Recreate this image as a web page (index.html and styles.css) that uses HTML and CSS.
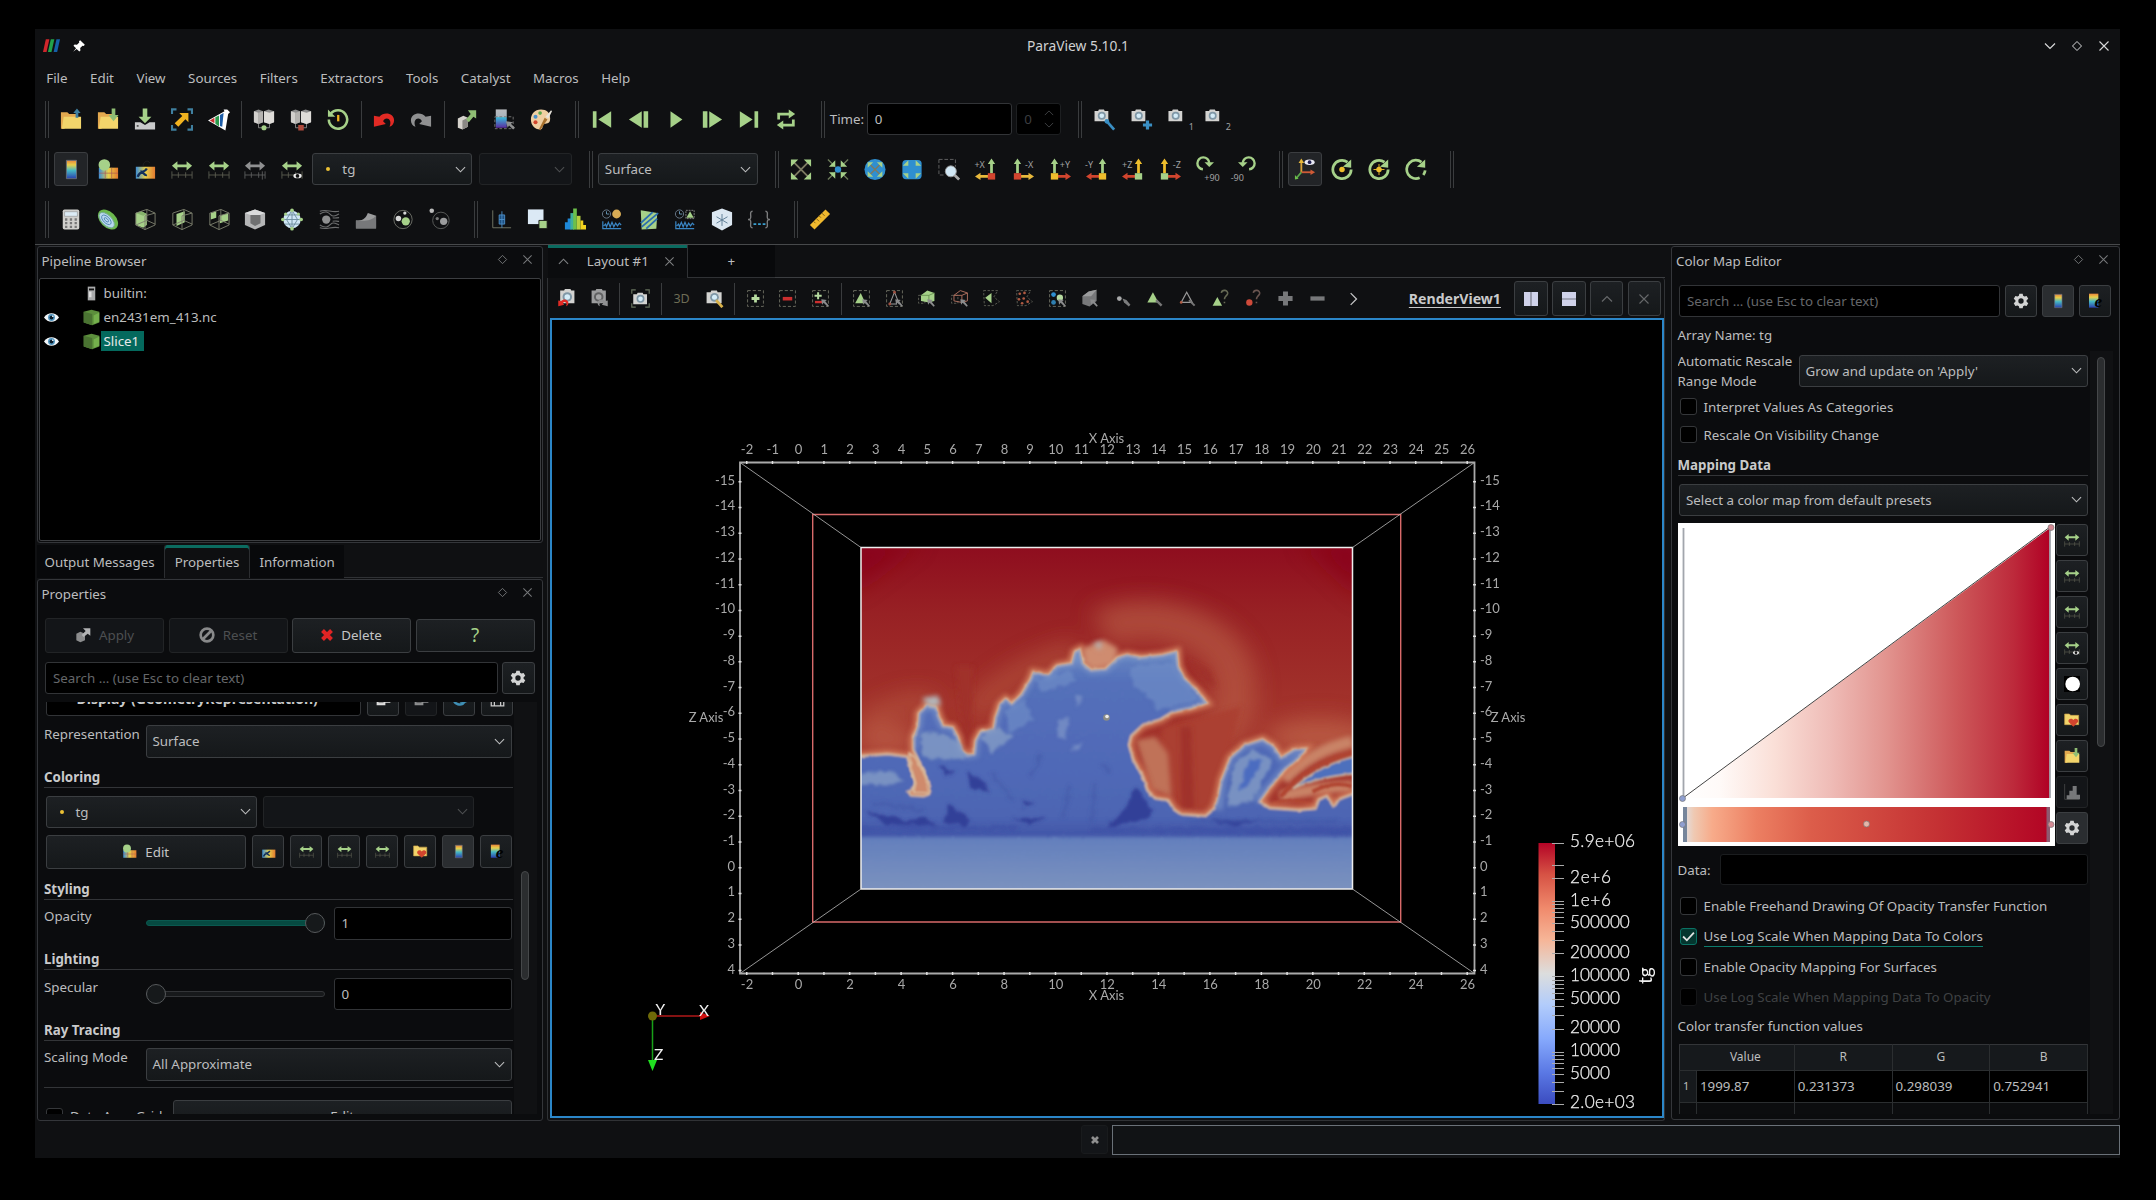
FILE: index.html
```html
<!DOCTYPE html>
<html lang="en">
<head>
<meta charset="utf-8">
<title>ParaView 5.10.1</title>
<link rel="stylesheet" href="styles.css">
</head>
<body>
<svg class="defs" width="0" height="0">
  <defs>
    <linearGradient id="jet" x1="0" y1="0" x2="0" y2="1"><stop offset="0" stop-color="#e8843c"/><stop offset=".25" stop-color="#e8d04a"/><stop offset=".55" stop-color="#45b8c4"/><stop offset="1" stop-color="#2a3fae"/></linearGradient>
    <linearGradient id="jeth" x1="0" y1="0" x2="1" y2="0"><stop offset="0" stop-color="#3d8fd8"/><stop offset=".5" stop-color="#e8d04a"/><stop offset="1" stop-color="#e27a30"/></linearGradient>
    <linearGradient id="blu" x1="0" y1="0" x2="0" y2="1"><stop offset="0" stop-color="#b9bcc0"/><stop offset=".4" stop-color="#a9b4bd"/><stop offset=".45" stop-color="#3bb6d8"/><stop offset="1" stop-color="#5a2ca0"/></linearGradient>
  </defs>
  <symbol id="logo" viewBox="0 0 24 24"><path fill="#d0262b" d="M4 3h5L5 21H0z"/><path fill="#22a34a" d="M11 3h5l-4 18H7z"/><path fill="#1560a8" d="M19 3h5l-4 18h-5z"/></symbol>
  <symbol id="pin" viewBox="0 0 24 24"><path fill="#fff" d="M14 2l8 8-2 2-2-.5-4 4 .5 4-2 2-4.500-4.500L2 22l5-6-4.500-4.500 2-2 4 .5 4-4L12 4z"/></symbol>
  <symbol id="open" viewBox="0 0 24 24"><path fill="#e3a94f" d="M1 4h7l2 2h8v5H5v11H1z"/><path fill="#f2d56b" d="M4 9h19v13H2z"/><path fill="#3f7f9f" d="M18.500 0l4 5h-2.500v5h-3V5h-2.500z"/></symbol>
  <symbol id="save" viewBox="0 0 24 24"><path fill="#e3a94f" d="M1 4h7l2 2h8v5H5v11H1z"/><path fill="#f2d56b" d="M4 9h19v13H2z"/><path fill="#8fbe74" d="M16 0h4v7h3.500L18 14l-5.500-7H16z"/></symbol>
  <symbol id="dl" viewBox="0 0 24 24"><path fill="#a6d189" d="M9.500 0h5v9H19l-7 7-7-7h4.500z"/><path fill="#c9cacb" d="M1 15h6l5 3 5-3h6v8H1z"/><path fill="#555" d="M3 18h2v2H3z"/></symbol>
  <symbol id="expand" viewBox="0 0 24 24"><path fill="none" stroke="#3f7f9f" stroke-width="2.500" d="M1 6V1h5M18 1h5v5M23 18v5h-5M6 23H1v-5"/><path fill="#f0b21f" d="M9 5h10v10l-3.300-3.300L8 20l-4-4 8.300-7.700z"/></symbol>
  <symbol id="flash" viewBox="0 0 24 24"><path fill="#fff" d="M0 13L18 3l-1-2 4 0 3 3-2 2-3 18z"/><path fill="#c33" d="M2 13l5-3v6z"/><path fill="#2c9a4b" d="M8 9.500l4-2v12l-4-3z"/><path fill="#1d5da8" d="M13 7l4-2-1.500 15L13 19z"/></symbol>
  <symbol id="srv" viewBox="0 0 24 24"><path fill="#8d8d8d" d="M1 3l5-2 5 2v12l-5 2-5-2z"/><path fill="#d2d0cd" d="M1 3l5 1.500V17l-5-2z"/><path fill="#8d8d8d" d="M12 3l5-2 6 2v12l-5 2-6-2z"/><path fill="#dedcd8" d="M12 3l6 1.500V17l-6-2zM18 4.500L23 3v12l-5 2z"/><path fill="#b5b3b0" d="M6 4.500L11 3v12l-5 2z"/><path fill="none" stroke="#888" d="M6 17v4h12v-4"/></symbol>
  <symbol id="srv1" viewBox="0 0 24 24"><use href="#srv"/><circle cx="12" cy="21" r="2.800" fill="#a6d189"/></symbol>
  <symbol id="srv2" viewBox="0 0 24 24"><use href="#srv"/><path fill="#b04a3c" d="M9 18h6v6H9z"/></symbol>
  <symbol id="hist" viewBox="0 0 24 24"><path fill="none" stroke="#a6d189" stroke-width="2.800" d="M4 6a10 10 0 1 1-2 6"/><path fill="#a6d189" d="M1 1v8h8z"/><path fill="#f0b21f" d="M11 7h2.500v7H11z"/></symbol>
  <symbol id="undo" viewBox="0 0 24 24"><path fill="#e22a24" d="M1 8l6 1c5-6 16-4 16 4 0 3-2 6-5 7 2-4 1-9-3-9-2 0-3 1-4 3l3 3L1 20z"/></symbol>
  <symbol id="redo" viewBox="0 0 24 24"><path fill="#8f9091" d="M23 8l-6 1C12 3 1 5 1 13c0 3 2 6 5 7-2-4-1-9 3-9 2 0 3 1 4 3l-3 3 13 3z"/></symbol>
  <symbol id="boxout" viewBox="0 0 24 24"><path fill="#d5d2cc" d="M2 11l6-3 5 2v10l-6 3-5-2z"/><path fill="#8a8884" d="M7 13l6-3v10l-6 3z"/><path fill="#8fbe74" d="M13 2h9v9l-3-2-5 6-3-3 5-6z"/></symbol>
  <symbol id="cmsel" viewBox="0 0 24 24"><path fill="url(#blu)" d="M3 1h12v20H3z"/><path fill="none" stroke="#777" stroke-dasharray="3 2" d="M2 9h20v13H2z"/><path fill="#8f9091" d="M14 14l8 1-2.500 1.500L24 21l-2 2-4.500-4.500L16 21z"/></symbol>
  <symbol id="pal" viewBox="0 0 24 24"><path fill="#efcfa2" d="M12 1C5 1 1 6 1 12s4 11 10 11c4 0 2-5 4-6s7 1 7-6S18 1 12 1z"/><circle cx="6" cy="9" r="2.200" fill="#4a90c8"/><circle cx="11" cy="5" r="2" fill="#5aa84b"/><circle cx="6" cy="15" r="2.200" fill="#d2452e"/><path fill="#e8e4dc" d="M17 9l6-7 1 1-4 8z"/><path fill="#a8712e" d="M16 10l3 2-8 12-1-2z"/></symbol>
  <symbol id="first" viewBox="0 0 24 24"><path fill="#a6d189" d="M2 3h4v18H2zM22 3v18L8 12z"/></symbol>
  <symbol id="prev" viewBox="0 0 24 24"><path fill="#a6d189" d="M15 3v18L1 12zM17 3h5v18h-5z"/></symbol>
  <symbol id="play" viewBox="0 0 24 24"><path fill="#a6d189" d="M6 3l13 9L6 21z"/></symbol>
  <symbol id="next" viewBox="0 0 24 24"><path fill="#a6d189" d="M9 3v18l14-9zM2 3h5v18H2z"/></symbol>
  <symbol id="last" viewBox="0 0 24 24"><path fill="#a6d189" d="M18 3h4v18h-4zM2 3v18l14-9z"/></symbol>
  <symbol id="loop" viewBox="0 0 24 24"><path fill="none" stroke="#a6d189" stroke-width="3" d="M4 12V6h12M20 12v6H8"/><path fill="#a6d189" d="M15 1l7 5-7 5zM9 13l-7 5 7 5z"/></symbol>
  <symbol id="cam" viewBox="0 0 24 24"><path fill="#d3d3d1" d="M2 6h5l1-2h7l1 2h5v14H2z"/><circle cx="12" cy="12.500" r="5.500" fill="#7f97a6"/><circle cx="12" cy="12.500" r="3.200" fill="#d4ecf8"/></symbol>
  <symbol id="camw" viewBox="0 0 24 24"><use href="#cam" width="19" height="19" x="-1" y="-2"/><path stroke="#3a8fc4" stroke-width="3" d="M14 14l8 9"/><circle cx="14" cy="14" r="2.500" fill="#3a8fc4"/></symbol>
  <symbol id="camp" viewBox="0 0 24 24"><use href="#cam" width="19" height="19" x="-1" y="-2"/><path stroke="#3a8fc4" stroke-width="3.500" d="M18 13v10M13 18h10"/></symbol>
  <symbol id="cam1" viewBox="0 0 24 24"><use href="#cam" width="19" height="19" y="-2"/></symbol>
  <symbol id="cbar" viewBox="0 0 24 24"><path fill="url(#jet)" stroke="#66707c" d="M7 2h11v20H7z"/></symbol>
  <symbol id="cedit" viewBox="0 0 24 24"><path fill="url(#jeth)" d="M2 10h21v12H2z"/><path stroke="#a55" stroke-width=".7" d="M2 16h21M9 10v12M16 10v12"/><circle cx="8" cy="7" r="6.300" fill="#a6d189"/></symbol>
  <symbol id="csep" viewBox="0 0 24 24"><path fill="url(#jeth)" d="M2 9h21v13H2z"/><path fill="none" stroke="#12305c" stroke-width="2.500" d="M4 20c3-8 7-3 10-9M7 14c3 0 4 5 7 4"/><path fill="none" stroke="#222" d="M10 8c0-5 6-7 7-3"/></symbol>
  <symbol id="resc" viewBox="0 0 24 24"><path fill="#a6d189" d="M1 8l6-5v3.500h10V3l6 5-6 5V9.500H7V13z"/><path stroke="#5a5c50" d="M1 14v8M23 14v8M1 18h22M8 15v6M16 15v6"/></symbol>
  <symbol id="rescg" viewBox="0 0 24 24"><path fill="#8f9091" d="M1 8l6-5v3.500h10V3l6 5-6 5V9.500H7V13z"/><path stroke="#5a5c5c" d="M1 14v8M23 14v8M1 18h22M8 15v6M16 15v6M20 14v9"/></symbol>
  <symbol id="resce" viewBox="0 0 24 24"><use href="#resc"/><ellipse cx="18" cy="19" rx="4.500" ry="2.600" fill="#eee"/><circle cx="18" cy="19" r="2" fill="#111"/></symbol>
  <symbol id="calc" viewBox="0 0 24 24"><rect x="3" y="1" width="18" height="22" rx="2" fill="#d0cfcc"/><path fill="#dcebf5" stroke="#888" stroke-width=".6" d="M5 3.500h14v5H5z"/><path stroke="#777" stroke-width="2.500" stroke-dasharray="2.500 2.700" d="M5.500 12h14M5.500 16h14M5.500 20h14"/></symbol>
  <symbol id="contour" viewBox="0 0 24 24"><g transform="rotate(45 12 12)"><ellipse cx="12" cy="12" rx="13" ry="8.500" fill="#6cb84e"/><ellipse cx="11.500" cy="13.500" rx="10.500" ry="5.500" fill="#b9d8ee" stroke="#7a9"/><ellipse cx="11" cy="13.500" rx="6.500" ry="3.400" fill="none" stroke="#4f86b5"/><ellipse cx="11" cy="13.500" rx="3" ry="1.400" fill="none" stroke="#4f86b5"/></g></symbol>
  <symbol id="cube" viewBox="0 0 24 24"><path fill="none" stroke="#7d806f" d="M2 5l12-4 9 4v13l-11 5L2 18zM12 8l11-3M12 8v15M14 1v12l9 4M14 13L2 18"/></symbol>
  <symbol id="clip" viewBox="0 0 24 24"><path fill="#a6d189" d="M2 5l6-2 6 3v12l-4 3-8-3z"/><path fill="#86b36b" d="M2 5l6-2 6 3-4 2z"/><use href="#cube"/></symbol>
  <symbol id="slice" viewBox="0 0 24 24"><path fill="#a6d189" d="M6 6l9-3v12l-9 4z"/><use href="#cube"/></symbol>
  <symbol id="thresh" viewBox="0 0 24 24"><path fill="#a6d189" d="M3 5l6-2v7l-6 2zM13 8l9-3v8l-9 3z"/><use href="#cube"/></symbol>
  <symbol id="subset" viewBox="0 0 24 24"><path fill="#b4b5b6" d="M1 5l11-4 11 4v13l-11 5L1 18z"/><path fill="#dadbdc" d="M1 5l11-4 11 4-11 4z"/><path fill="#6f7071" d="M7 7h11v9l-6 3-5-3z"/></symbol>
  <symbol id="glyph" viewBox="0 0 24 24"><circle cx="12" cy="12" r="9.500" fill="#cfe6f5"/><path fill="none" stroke="#6b8c9c" d="M12 2v20M2 12h20M4 7h16M4 17h16M12 2L6 12l6 10 6-10z"/><g fill="#a6d189"><circle cx="12" cy="2" r="2"/><circle cx="12" cy="22" r="2"/><circle cx="2" cy="12" r="2"/><circle cx="22" cy="12" r="2"/><circle cx="5" cy="6" r="1.700"/><circle cx="19" cy="6" r="1.700"/></g></symbol>
  <symbol id="stream" viewBox="0 0 24 24"><circle cx="9" cy="12" r="4.500" fill="#8f9091"/><path fill="none" stroke="#6d6e6f" stroke-width="1.200" d="M2 6c6-4 9-2 12 1s6 0 9-1M2 3c8-3 12 2 21 0M2 18c6 4 9 2 12-1s6 0 9 1M2 21c8 3 12-2 21 0M16 10c3 1 4 0 7 0M16 14c3-1 4 0 7 0"/></symbol>
  <symbol id="warp" viewBox="0 0 24 24"><path fill="#9b9c9d" d="M1 13c8 1 11-3 13-8l9 3v13H1z"/><path fill="#77787a" d="M1 13c8 1 17 1 22-5v14H1z"/></symbol>
  <symbol id="group" viewBox="0 0 24 24"><circle cx="12" cy="12" r="10" fill="none" stroke="#6d7068"/><circle cx="7" cy="11" r="3" fill="#d7d8d8"/><circle cx="15" cy="14" r="4.500" fill="#a6d189"/><circle cx="14" cy="5" r="1.800" fill="#d7d8d8"/></symbol>
  <symbol id="extr" viewBox="0 0 24 24"><circle cx="13" cy="13" r="9" fill="none" stroke="#5c5e5c"/><circle cx="3" cy="2.500" r="2.500" fill="#bbb"/><circle cx="16" cy="14" r="4" fill="#9b9c9d"/><circle cx="9" cy="11" r="1.800" fill="#777"/></symbol>
  <symbol id="boxp" viewBox="0 0 24 24"><path fill="none" stroke="#777a68" d="M3 2v19h20"/><path fill="#1d4f7f" stroke="#4d8fc9" d="M10 7h6v10h-6zM13 3v18M10 12h6"/></symbol>
  <symbol id="pick" viewBox="0 0 24 24"><path fill="#dbe9f5" d="M1 1h17v16H1z"/><path fill="#a6d189" stroke="#111" d="M13 13h9v9h-9z"/></symbol>
  <symbol id="hg" viewBox="0 0 24 24"><path fill="#1e88d8" d="M1 15h4v8H1zM4 11h4v12H4z"/><path fill="#3fae9c" d="M7 5h4v18H7z"/><path fill="#6cc04a" d="M10 0h4v23h-4z"/><path fill="#b5cf3f" d="M14 8h4v15h-4z"/><path fill="#f2d21f" d="M18 13h3v10h-3zM20 18h4v5h-4z"/></symbol>
  <symbol id="ptime" viewBox="0 0 24 24"><circle cx="6" cy="6" r="4.500" fill="none" stroke="#6b7c8c"/><path stroke="#6b9cbc" d="M6 3v3h3"/><circle cx="17" cy="6" r="4.800" fill="#d8ac55"/><path fill="none" stroke="#3a86c4" stroke-width="1.300" d="M2 14v8h20M3 19l2-2 1 3 2-5 2 5 2-5 2 5 2-4 2 3 2-3 2 2"/></symbol>
  <symbol id="pline" viewBox="0 0 24 24"><path fill="#a6d189" d="M3 2l18 3-1 17-16 1z"/><path stroke="#2a6eae" stroke-width="2" d="M4 20L22 5M3 16L16 4M9 22l12-11"/></symbol>
  <symbol id="psel" viewBox="0 0 24 24"><circle cx="6" cy="6" r="4.500" fill="none" stroke="#6b7c8c"/><path stroke="#6b9cbc" d="M6 3v3h3"/><path fill="none" stroke="#888" stroke-dasharray="2 1" d="M13 2h9v9h-9z"/><path fill="#a6d189" d="M17.500 3l4 7h-8z"/><path fill="none" stroke="#3a86c4" stroke-width="1.300" d="M2 14v8h20M3 19l2-2 1 3 2-5 2 5 2-5 2 5 2-4 2 3 2-3 2 2"/></symbol>
  <symbol id="snow" viewBox="0 0 24 24"><path fill="#dbe7f1" d="M12 0l11 4v14l-11 6L1 18V4z"/><path stroke="#5a7a92" d="M12 6v13M6 9l12 7M18 9L6 16"/></symbol>
  <symbol id="brace" viewBox="0 0 24 24"><path fill="none" stroke="#7c7d7e" stroke-width="1.500" d="M5 3C2 3 3 6 3 9s-1 3-3 3c2 0 3 0 3 3s-1 6 2 6M19 3c3 0 2 3 2 6s1 3 3 3c-2 0-3 0-3 3s1 6-2 6"/><path fill="#3a9fd0" d="M6 16h3v2H6zM11 16h3v2h-3zM16 16h3v2h-3z"/></symbol>
  <symbol id="ruler" viewBox="0 0 24 24"><path fill="#f0b92e" d="M1 18L18 1l5 5L6 23z"/><path stroke="#7a5a10" d="M5 14l2 2M8 11l3 3M11 8l2 2M14 5l3 3"/></symbol>
  <symbol id="cross4" viewBox="0 0 24 24"><path stroke="#7c7a62" stroke-width="2" d="M4 4l16 16M20 4L4 20"/><path fill="#a6d189" d="M1 1h8L1 9zM23 1v8l-8-8zM1 23v-8l8 8zM23 23h-8l8-8z"/></symbol>
  <symbol id="zdata" viewBox="0 0 24 24"><path stroke="#6c7a5a" stroke-width="1.500" d="M1 1l8 8M23 1l-8 8M1 23l8-8M23 23l-8-8"/><path fill="#a6d189" d="M9 9H2l7-7zM15 9V2l7 7zM9 15v7l-7-7zM15 15h7l-7 7z"/><circle cx="12" cy="12" r="3.500" fill="#2f8fd0"/></symbol>
  <symbol id="zc" viewBox="0 0 24 24"><circle cx="12" cy="12" r="11.500" fill="#2f8fd0"/><path stroke="#7c7a62" stroke-width="1.500" d="M6 6l12 12M18 6L6 18"/><path fill="#a6d189" d="M4 4h6l-6 6zM20 4v6l-6-6zM4 20v-6l6 6zM20 20h-6l6-6z"/></symbol>
  <symbol id="zcs" viewBox="0 0 24 24"><rect x="1.500" y="1.500" width="21" height="21" rx="4" fill="#2f8fd0"/><path fill="#a6d189" d="M8 8H2l6-6zM16 8V2l6 6zM8 16v6l-6-6zM16 16h6l-6 6z"/></symbol>
  <symbol id="zbox" viewBox="0 0 24 24"><path fill="none" stroke="#666" stroke-dasharray="4 2" d="M1 1h18v8M1 1v17h6"/><path stroke="#aaa" stroke-width="3" d="M18 18l5 5"/><circle cx="14" cy="14" r="6" fill="#d2e8f5" stroke="#999"/></symbol>
  <symbol id="axr" viewBox="0 0 24 24"><path fill="#a6d189" d="M18 0l4 6h-2.500v10h-3V6H14z"/><path fill="#e8b93c" d="M0 19.500l6-4V18h10v3H6v2.500z"/><path fill="#d2452e" d="M14 16h8v7h-8z"/></symbol>
  <symbol id="axl" viewBox="0 0 24 24"><path fill="#a6d189" d="M6 0l4 6H7.500v10h-3V6H2z"/><path fill="#e8b93c" d="M24 19.500l-6-4V18H8v3h10v2.500z"/><path fill="#d2452e" d="M2 16h8v7H2z"/></symbol>
  <symbol id="ayl" viewBox="0 0 24 24"><path fill="#a6d189" d="M6 0l4 6H7.500v10h-3V6H2z"/><path fill="#d2452e" d="M24 19.500l-6-4V18H8v3h10v2.500z"/><path fill="#efbe2c" d="M2 16h8v7H2z"/></symbol>
  <symbol id="ayr" viewBox="0 0 24 24"><path fill="#a6d189" d="M18 0l4 6h-2.500v10h-3V6H14z"/><path fill="#d2452e" d="M0 19.500l6-4V18h10v3H6v2.500z"/><path fill="#efbe2c" d="M14 16h8v7h-8z"/></symbol>
  <symbol id="azr" viewBox="0 0 24 24"><path fill="#efbe2c" d="M18 0l4 6h-2.500v10h-3V6H14z"/><path fill="#d2452e" d="M0 19.500l6-4V18h10v3H6v2.500z"/><path fill="#a6d189" d="M14 16h8v7h-8z"/></symbol>
  <symbol id="azl" viewBox="0 0 24 24"><path fill="#efbe2c" d="M6 0l4 6H7.500v10h-3V6H2z"/><path fill="#d2452e" d="M24 19.500l-6-4V18H8v3h10v2.500z"/><path fill="#a6d189" d="M2 16h8v7H2z"/></symbol>
  <symbol id="r90" viewBox="0 0 24 24"><path fill="none" stroke="#a6d189" stroke-width="3" d="M10 18a7.500 7.500 0 1 1 8-8"/><path fill="#a6d189" d="M12 9h12l-6 6z"/></symbol>
  <symbol id="l90" viewBox="0 0 24 24"><path fill="none" stroke="#a6d189" stroke-width="3" d="M14 18a7.500 7.500 0 1 0-8-8"/><path fill="#a6d189" d="M12 9H0l6 6z"/></symbol>
  <symbol id="axes" viewBox="0 0 24 24"><path stroke="#d9a23a" stroke-width="2" d="M8 4v11"/><path stroke="#cf5a36" stroke-width="2" d="M8 15h11"/><path stroke="#5aa84b" stroke-width="2" d="M8 15l-5 6"/><path fill="#e8b93c" d="M5 5l3-5 3 5z"/><path fill="#cf5a36" d="M18 12l5 3-5 3z"/><path fill="#6cc04a" d="M1 23v-5l4 4z"/><ellipse cx="17" cy="4" rx="5.500" ry="3" fill="#e9e9f4"/><circle cx="17" cy="4" r="2" fill="#225"/></symbol>
  <symbol id="rot" viewBox="0 0 24 24"><path fill="none" stroke="#a6d189" stroke-width="3" d="M18 4a10 10 0 1 0 4 8"/><path fill="#a6d189" d="M13 9l9-8v9z"/></symbol>
  <symbol id="rot1" viewBox="0 0 24 24"><use href="#rot"/><circle cx="12" cy="12" r="3" fill="#efbe2c"/></symbol>
  <symbol id="rot2" viewBox="0 0 24 24"><use href="#rot"/><circle cx="12" cy="12" r="3" fill="#efbe2c"/><path stroke="#efbe2c" d="M6 12h12M12 6v12"/></symbol>
  <symbol id="rot3" viewBox="0 0 24 24"><path fill="none" stroke="#a6d189" stroke-width="3" d="M18 4a10 10 0 1 0-2 17M22 13a10 10 0 0 1-2 5"/><path fill="#a6d189" d="M13 9l9-8v9z"/></symbol>
  <symbol id="cundo" viewBox="0 0 24 24"><path fill="#d3d3d1" d="M4 2h5l1-2h7l1 2h4v16H4z"/><circle cx="13" cy="10" r="6" fill="#7f97a6"/><circle cx="13" cy="10" r="3.500" fill="#d4ecf8"/><use href="#undo" x="0" y="10" width="16" height="14"/></symbol>
  <symbol id="credo" viewBox="0 0 24 24"><path fill="#9b9c9d" d="M2 2h5l1-2h7l1 2h4v16H2z"/><circle cx="11" cy="10" r="6" fill="#606162"/><circle cx="11" cy="10" r="3.500" fill="#a5a6a7"/><use href="#redo" x="8" y="10" width="16" height="14"/></symbol>
  <symbol id="shot" viewBox="0 0 24 24"><path fill="none" stroke="#66705c" stroke-width="1.500" d="M1 6V1h5M18 1h5v5M23 18v5h-5M6 23H1v-5"/><use href="#cam" x="1" y="1" width="22" height="22"/></symbol>
  <symbol id="cped" viewBox="0 0 24 24"><use href="#cam" y="-2"/><path stroke="#d9b24a" stroke-width="3.500" d="M14 14l8 9"/></symbol>
  <symbol id="sq" viewBox="0 0 24 24"><path fill="none" stroke="#6a6c60" stroke-width="1.200" stroke-dasharray="4 2.500" d="M2 2h20v20H2z"/></symbol>
  <symbol id="wand" viewBox="0 0 24 24"><path fill="#8b8c8d" d="M13 13l7 1-2 1.500 4.500 5.500-1.500 1.500-5-5L14 20z"/></symbol>
  <symbol id="sadd" viewBox="0 0 24 24"><use href="#sq"/><path stroke="#b7dba0" stroke-width="3.500" d="M12 7v10M7 12h10"/></symbol>
  <symbol id="ssub" viewBox="0 0 24 24"><use href="#sq"/><path fill="#cc2f2f" d="M6 10h12v4.500H6z"/></symbol>
  <symbol id="stog" viewBox="0 0 24 24"><use href="#sq"/><path stroke="#b7dba0" stroke-width="2.500" d="M9 4v9M4.500 8.500h9"/><path fill="#cc2f2f" d="M5 15h9v3H5z"/><use href="#wand"/></symbol>
  <symbol id="scell" viewBox="0 0 24 24"><use href="#sq"/><path fill="#a6d189" d="M11 5l6 13H4z"/><use href="#wand"/></symbol>
  <symbol id="spt" viewBox="0 0 24 24"><use href="#sq"/><path fill="none" stroke="#999" stroke-width="1.300" d="M12 4l6 15M12 4L6 19h9"/><circle cx="12" cy="4" r="1.800" fill="#a05040"/><circle cx="6" cy="19" r="1.800" fill="#a05040"/><use href="#wand"/></symbol>
  <symbol id="sfc" viewBox="0 0 24 24"><path fill="none" stroke="#6a6c60" stroke-dasharray="3 2" d="M2 8h8v10H2z"/><path fill="#a6d189" d="M5 8l8-6 9 3v10l-7 2-10-2z"/><path fill="none" stroke="#5f8a48" d="M5 8h10l7-3M15 8v9"/><use href="#wand"/></symbol>
  <symbol id="sfp" viewBox="0 0 24 24"><path fill="none" stroke="#6a6c60" stroke-dasharray="3 2" d="M2 8h8v10H2z"/><path fill="none" stroke="#b0705f" stroke-width="1.200" d="M5 8l8-6 9 3v10l-7 2-10-2zM5 8h10l7-3M15 8v9"/><use href="#wand"/></symbol>
  <symbol id="spc" viewBox="0 0 24 24"><path fill="none" stroke="#6a6c60" stroke-dasharray="3 2" d="M2 2h18l-5 8 7 6-8 5H3z"/><path fill="#a6d189" d="M12 5v13l-8-7z"/></symbol>
  <symbol id="spp" viewBox="0 0 24 24"><path fill="none" stroke="#6a6c60" stroke-dasharray="3 2" d="M2 2h18l-5 8 7 6-8 5H3z"/><g fill="#b05a42"><circle cx="6" cy="6" r="1.700"/><circle cx="12" cy="5" r="1.700"/><circle cx="5" cy="13" r="1.700"/><circle cx="11" cy="12" r="1.700"/><circle cx="9" cy="18" r="1.700"/><circle cx="16" cy="16" r="1.700"/></g></symbol>
  <symbol id="sbl" viewBox="0 0 24 24"><use href="#sq"/><circle cx="7" cy="7" r="3" fill="#2f8fd0"/><circle cx="7" cy="17" r="3" fill="#2f7fb0"/><circle cx="15" cy="11" r="4" fill="#b7dba0"/><use href="#wand"/></symbol>
  <symbol id="sgc" viewBox="0 0 24 24"><path fill="#77787a" d="M3 9l8-6 10-2v14l-9 7-9-3z"/><path fill="#9b9c9d" d="M3 9l8-6 10-2-7 8z"/><use href="#wand"/></symbol>
  <symbol id="sdot" viewBox="0 0 24 24"><circle cx="8" cy="12" r="3" fill="#a8a9aa"/><path fill="#7b7c7d" d="M12 12l5 2 5 6-2 2-6-5z"/></symbol>
  <symbol id="scg" viewBox="0 0 24 24"><path fill="#a6d189" d="M10 4l7 13H3z"/><path stroke="#777" stroke-width="3" d="M14 14l7 7"/></symbol>
  <symbol id="spg" viewBox="0 0 24 24"><path fill="none" stroke="#999" stroke-width="1.500" d="M11 4l7 13H4z"/><circle cx="4" cy="17" r="1.700" fill="#b05a42"/><path stroke="#777" stroke-width="2.500" d="M14 14l7 7"/></symbol>
  <symbol id="qc" viewBox="0 0 24 24"><path fill="#a6d189" d="M8 10l6 11H2z"/><path fill="none" stroke="#666a55" stroke-width="2" d="M13 5c1-5 9-4 8 1-1 3-4 3-4 7M17 16v2"/></symbol>
  <symbol id="qp" viewBox="0 0 24 24"><circle cx="8" cy="17" r="4" fill="#cf4a3a"/><path fill="none" stroke="#6a5550" stroke-width="2" d="M13 5c1-5 9-4 8 1-1 3-4 3-4 7M17 16v2"/></symbol>
  <symbol id="plus" viewBox="0 0 24 24"><path stroke="#77787a" stroke-width="7" d="M12 2v20M2 12h20"/></symbol>
  <symbol id="minus" viewBox="0 0 24 24"><path stroke="#77787a" stroke-width="6" d="M2 12h20"/></symbol>
  <symbol id="dia" viewBox="0 0 12 12"><path fill="none" stroke="currentColor" d="M6 1.500L10.500 6 6 10.500 1.500 6z"/></symbol>
  <symbol id="x" viewBox="0 0 12 12"><path fill="none" stroke="currentColor" stroke-width="1.100" d="M1.500 1.500l9 9M10.500 1.500l-9 9"/></symbol>
  <symbol id="dn" viewBox="0 0 12 12"><path fill="none" stroke="currentColor" stroke-width="1.200" d="M1 3.500l5 5 5-5"/></symbol>
  <symbol id="up" viewBox="0 0 12 12"><path fill="none" stroke="currentColor" stroke-width="1.200" d="M1 8.500l5-5 5 5"/></symbol>
  <symbol id="gear" viewBox="0 0 24 24"><path fill="#d3d4d4" fill-rule="evenodd" d="M9.500 1h5l.7 3.200 2 1.200 3.200-1 2.500 4.300-2.500 2.200v2.200l2.500 2.200-2.500 4.300-3.200-1-2 1.200-.7 3.200h-5l-.7-3.200-2-1.200-3.200 1-2.500-4.300 2.500-2.200v-2.200L1.100 8.700l2.500-4.300 3.200 1 2-1.200zM12 8a4 4 0 1 0 0 8 4 4 0 0 0 0-8z"/></symbol>
  <symbol id="ced" viewBox="0 0 24 24"><path fill="url(#jet)" d="M3 1h14v21H3z"/></symbol>
  <symbol id="fav" viewBox="0 0 24 24"><path fill="#f2d56b" stroke="#c9a048" d="M1 3h7l2 2h12v14H1z"/><path fill="#d2452e" d="M14 22l-7-7c-2-4 4-7 7-3 3-4 9-1 7 3z"/></symbol>
  <symbol id="eye" viewBox="0 0 24 24"><path fill="#f2f6f9" d="M0 12c6-9 18-9 24 0-6 9-18 9-24 0z"/><circle cx="12" cy="12" r="5.500" fill="#4d92bd"/><circle cx="12" cy="12" r="3" fill="#0a1c2a"/><circle cx="14" cy="10" r="1.300" fill="#fff"/></symbol>
  <symbol id="gcube" viewBox="0 0 24 24"><path fill="#5c8f3c" d="M1 4l11-3 11 3v15l-10 4-12-4z"/><path fill="#4a7332" d="M1 4l12 3v16L1 19z"/><path fill="#74b04c" d="M15 9l8-4v13l-8 3z"/></symbol>
  <symbol id="gchip" viewBox="0 0 24 24"><rect x="6" y="1" width="12" height="22" fill="#a9aaab"/><path fill="#111" d="M8 4h8v3H8z"/><path fill="#ddd" d="M8 9h4v9H8z"/></symbol>
  <symbol id="gapply" viewBox="0 0 24 24"><path fill="#8b8c8d" d="M2 10l6-3 7 3v10l-7 3-6-3z"/><path fill="#b2b3b4" d="M12 2h11v11l-4-3-6 5-3-3 6-6z"/></symbol>
  <symbol id="no" viewBox="0 0 24 24"><circle cx="12" cy="12" r="9.500" fill="none" stroke="#88898a" stroke-width="4"/><path stroke="#88898a" stroke-width="4" d="M18 6L6 18"/></symbol>
  <symbol id="del" viewBox="0 0 24 24"><path stroke="#e02424" stroke-width="8" d="M3 3l18 18M21 3L3 21"/></symbol>
  <symbol id="copy" viewBox="0 0 24 24"><path fill="#ddd" d="M1 3h14v18H1zM13 8h10v9H13z"/><path stroke="#555" d="M4 17h8M4 13h8"/></symbol>
  <symbol id="rld" viewBox="0 0 24 24"><path fill="none" stroke="#3f8fb5" stroke-width="4" d="M3 10a9 9 0 0 0 17 5M21 6v9h-8"/></symbol>
  <symbol id="flop" viewBox="0 0 24 24"><path fill="none" stroke="#ccc" stroke-width="2" d="M2 2h20v20H2zM7 22v-8h10v8"/></symbol>
  <symbol id="wc" viewBox="0 0 24 24"><path fill="#000" d="M0 0h24v24H0z"/><circle cx="13" cy="12" r="11" fill="#fff"/></symbol>
  <symbol id="ghist" viewBox="0 0 24 24"><path fill="none" stroke="#555" d="M1 0v23h22"/><path fill="#77787a" d="M4 17h4v6H4zM8 10h5v13H8zM13 3h6v20h-6zM19 16h5v7h-5z"/></symbol>
</svg>

<div class="window">
  <header class="titlebar">
    <svg class="logo"><use href="#logo"/></svg><svg class="pin"><use href="#pin"/></svg>
    <h1>ParaView 5.10.1</h1>
    <div class="winbtns"><svg><use href="#dn"/></svg><svg><use href="#dia"/></svg><svg><use href="#x"/></svg></div>
  </header>
  <nav class="menubar"><a>File</a><a>Edit</a><a>View</a><a>Sources</a><a>Filters</a><a>Extractors</a><a>Tools</a><a>Catalyst</a><a>Macros</a><a>Help</a></nav>

  <div class="bar">
    <i class="grip"></i>
    <b><svg><use href="#open"/></svg></b><b><svg><use href="#save"/></svg></b><b><svg><use href="#dl"/></svg></b><b><svg><use href="#expand"/></svg></b><b><svg><use href="#flash"/></svg></b>
    <i class="sep"></i>
    <b><svg><use href="#srv1"/></svg></b><b><svg><use href="#srv2"/></svg></b><b><svg><use href="#hist"/></svg></b>
    <i class="sep"></i>
    <b><svg><use href="#undo"/></svg></b><b><svg><use href="#redo"/></svg></b>
    <i class="sep"></i>
    <b><svg><use href="#boxout"/></svg></b><b><svg><use href="#cmsel"/></svg></b><b><svg><use href="#pal"/></svg></b>
    <i class="grip g11"></i>
    <b><svg><use href="#first"/></svg></b><b><svg><use href="#prev"/></svg></b><b><svg><use href="#play"/></svg></b><b><svg><use href="#next"/></svg></b><b><svg><use href="#last"/></svg></b><b><svg><use href="#loop"/></svg></b>
    <i class="grip g11"></i>
    <span class="time">Time:</span><div class="input timebox">0</div><div class="input spin">0<span><svg><use href="#up"/></svg><svg><use href="#dn"/></svg></span></div>
    <i class="grip g14"></i>
    <b><svg><use href="#camw"/></svg></b><b><svg><use href="#camp"/></svg></b><b><svg><use href="#cam1"/></svg><small class="cn">1</small></b><b><svg><use href="#cam1"/></svg><small class="cn">2</small></b>
  </div>
  <div class="bar">
    <i class="grip"></i>
    <b class="on"><svg><use href="#cbar"/></svg></b><b><svg><use href="#cedit"/></svg></b><b><svg><use href="#csep"/></svg></b><b><svg><use href="#resc"/></svg></b><b><svg><use href="#resc"/></svg></b><b><svg><use href="#rescg"/></svg></b><b><svg><use href="#resce"/></svg></b>
    <div class="combo c160"><em></em>tg<svg><use href="#dn"/></svg></div>
    <div class="combo c93 off"><svg><use href="#dn"/></svg></div>
    <i class="grip g13"></i>
    <div class="combo c160b">Surface<svg><use href="#dn"/></svg></div>
    <i class="grip g13"></i>
    <b><svg><use href="#cross4"/></svg></b><b><svg><use href="#zdata"/></svg></b><b><svg><use href="#zc"/></svg></b><b><svg><use href="#zcs"/></svg></b><b><svg><use href="#zbox"/></svg></b><b><svg><use href="#axr"/></svg><small class="tl">+X</small></b><b><svg><use href="#axl"/></svg><small class="tr">-X</small></b><b><svg><use href="#ayl"/></svg><small class="tr">+Y</small></b><b><svg><use href="#ayr"/></svg><small class="tl">-Y</small></b><b><svg><use href="#azr"/></svg><small class="tl">+Z</small></b><b><svg><use href="#azl"/></svg><small class="tr">-Z</small></b><b><svg class="up3"><use href="#r90"/></svg><small class="br">+90</small></b><b><svg class="up3 rt"><use href="#l90"/></svg><small class="bl">-90</small></b>
    <i class="grip g11"></i>
    <b class="on"><svg><use href="#axes"/></svg></b><b><svg><use href="#rot1"/></svg></b><b><svg><use href="#rot2"/></svg></b><b><svg><use href="#rot3"/></svg></b>
    <i class="grip g11"></i>
  </div>
  <div class="bar">
    <i class="grip"></i>
    <b><svg><use href="#calc"/></svg></b><b><svg><use href="#contour"/></svg></b><b><svg><use href="#clip"/></svg></b><b><svg><use href="#slice"/></svg></b><b><svg><use href="#thresh"/></svg></b><b><svg><use href="#subset"/></svg></b><b><svg><use href="#glyph"/></svg></b><b><svg><use href="#stream"/></svg></b><b><svg><use href="#warp"/></svg></b><b><svg><use href="#group"/></svg></b><b><svg><use href="#extr"/></svg></b>
    <i class="grip g11"></i>
    <b><svg><use href="#boxp"/></svg></b><b><svg><use href="#pick"/></svg></b><b><svg><use href="#hg"/></svg></b><b><svg><use href="#ptime"/></svg></b><b><svg><use href="#pline"/></svg></b><b><svg><use href="#psel"/></svg></b><b><svg><use href="#snow"/></svg></b><b><svg><use href="#brace"/></svg></b>
    <i class="grip g11"></i>
    <b><svg><use href="#ruler"/></svg></b>
  </div>

  <main>
    <aside class="left">
      <section class="dock pipeline">
        <div class="dtitle">Pipeline Browser<svg><use href="#dia"/></svg><svg><use href="#x"/></svg></div>
        <ul>
          <li><i></i><svg><use href="#gchip"/></svg><span>builtin:</span></li>
          <li><svg class="eye"><use href="#eye"/></svg><svg><use href="#gcube"/></svg><span>en2431em_413.nc</span></li>
          <li><svg class="eye"><use href="#eye"/></svg><svg><use href="#gcube"/></svg><span class="sel">Slice1</span></li>
        </ul>
      </section>
      <div class="tabs"><a>Output Messages</a><a class="cur">Properties</a><a>Information</a><i></i></div>
      <section class="dock props">
        <div class="dtitle">Properties<svg><use href="#dia"/></svg><svg><use href="#x"/></svg></div>
        <div class="actions">
          <div class="btn off"><svg><use href="#gapply"/></svg>Apply</div><div class="btn off"><svg><use href="#no"/></svg>Reset</div><div class="btn"><svg class="sm"><use href="#del"/></svg>Delete</div><div class="btn help">?</div>
        </div>
        <div class="searchrow"><div class="input ph">Search ... (use Esc to clear text)</div><div class="btn g"><svg><use href="#gear"/></svg></div></div>
        <div class="scroll">
          <div class="form">
            <div class="row disp"><div class="input dh">Display (GeometryRepresentation)</div><div class="btn s"><svg><use href="#copy"/></svg></div><div class="btn s off"><svg class="dim"><use href="#copy"/></svg></div><div class="btn s"><svg><use href="#rld"/></svg></div><div class="btn s"><svg><use href="#flop"/></svg></div></div>
            <div class="row rep"><label>Representation</label><div class="combo">Surface<svg><use href="#dn"/></svg></div></div>
            <h3>Coloring</h3>
            <div class="row"><div class="combo w212"><em></em>tg<svg><use href="#dn"/></svg></div><div class="combo w211 off"><svg><use href="#dn"/></svg></div></div>
            <div class="row edit"><div class="btn e"><svg><use href="#cedit"/></svg>Edit</div><div class="btn s"><svg><use href="#csep"/></svg></div><div class="btn s"><svg><use href="#resc"/></svg></div><div class="btn s"><svg><use href="#resc"/></svg></div><div class="btn s"><svg><use href="#resc"/></svg></div><div class="btn s"><svg><use href="#fav"/></svg></div><div class="btn s lit"><svg><use href="#cbar"/></svg></div><div class="btn s"><svg><use href="#ced"/></svg><small class="ee">e</small></div></div>
            <h3>Styling</h3>
            <div class="row"><label>Opacity</label><div class="slider full"><i></i></div><div class="input v">1</div></div>
            <h3>Lighting</h3>
            <div class="row"><label>Specular</label><div class="slider"><i></i></div><div class="input v">0</div></div>
            <h3>Ray Tracing</h3>
            <div class="row"><label>Scaling Mode</label><div class="combo">All Approximate<svg><use href="#dn"/></svg></div></div>
            <hr>
            <div class="row dag"><i class="chk"></i><label>Data Axes Grid</label><div class="btn">Edit</div></div>
          </div>
          <div class="track"><i class="thumbl"></i></div>
        </div>
      </section>
    </aside>

    <section class="center">
      <div class="ltabs"><div class="lt cur"><svg><use href="#up"/></svg><span>Layout #1</span><svg><use href="#x"/></svg></div><div class="lt plus">+</div><i></i></div>
      <div class="frame">
        <div class="vbar">
          <b><svg><use href="#cundo"/></svg></b><b><svg><use href="#credo"/></svg></b><i class="sep"></i><b><svg><use href="#shot"/></svg></b><i class="sep"></i><b class="t3">3D</b><b><svg><use href="#cped"/></svg></b><i class="sep"></i><b><svg><use href="#sadd"/></svg></b><b><svg><use href="#ssub"/></svg></b><b><svg><use href="#stog"/></svg></b><i class="sep"></i><b><svg><use href="#scell"/></svg></b><b><svg><use href="#spt"/></svg></b><b><svg><use href="#sfc"/></svg></b><b><svg><use href="#sfp"/></svg></b><b><svg><use href="#spc"/></svg></b><b><svg><use href="#spp"/></svg></b><b><svg><use href="#sbl"/></svg></b><b><svg><use href="#sgc"/></svg></b><b><svg><use href="#sdot"/></svg></b><b><svg><use href="#scg"/></svg></b><b><svg><use href="#spg"/></svg></b><b><svg><use href="#qc"/></svg></b><b><svg><use href="#qp"/></svg></b><b><svg class="pm"><use href="#plus"/></svg></b><b><svg class="pm"><use href="#minus"/></svg></b>
          <svg class="more" viewBox="0 0 12 12"><path fill="none" stroke="#c3c4c5" stroke-width="1.100" d="M4 1l5 5-5 5"/></svg>
          <span class="rv">RenderView1</span>
          <div class="btn r"><svg viewBox="0 0 16 16"><path fill="#cfd2ea" d="M1 1h6.700v14H1zM8.300 1H15v14H8.300z"/></svg></div><div class="btn r"><svg viewBox="0 0 16 16"><path fill="#cfd2ea" d="M1 1h14v6.700H1zM1 8.300h14V15H1z"/></svg></div><div class="btn r d"><svg><use href="#up"/></svg></div><div class="btn r d"><svg><use href="#x"/></svg></div>
        </div>
        <div class="view">
          <svg class="scene" viewBox="550 318 1114 800">
            <defs>
              <linearGradient id="sky" x1="0" y1="0" x2="0" y2="1"><stop offset="0" stop-color="#8e0c1e"/><stop offset=".2" stop-color="#982124"/><stop offset=".45" stop-color="#a2322b"/><stop offset="1" stop-color="#a83c30"/></linearGradient>
              <linearGradient id="sea" gradientUnits="userSpaceOnUse" x1="0" y1="380" x2="0" y2="1107"><stop offset="0" stop-color="#6a8ac4"/><stop offset=".15" stop-color="#5470ba"/><stop offset=".5" stop-color="#5069b7"/><stop offset=".7" stop-color="#4d65b3"/><stop offset=".775" stop-color="#4257a9"/><stop offset=".795" stop-color="#6480bd"/><stop offset="1" stop-color="#7b92bf"/></linearGradient>
              <linearGradient id="cw" x1="0" y1="0" x2="0" y2="1"><stop offset="0" stop-color="#b40426"/><stop offset=".12" stop-color="#d65244"/><stop offset=".25" stop-color="#f08a6c"/><stop offset=".37" stop-color="#f6b597"/><stop offset=".5" stop-color="#dcdddd"/><stop offset=".62" stop-color="#b2ccfb"/><stop offset=".75" stop-color="#86a9fc"/><stop offset=".88" stop-color="#5a78e4"/><stop offset="1" stop-color="#3b4cc0"/></linearGradient>
              <filter id="b3" x="-10%" y="-10%" width="120%" height="120%"><feTurbulence type="fractalNoise" baseFrequency=".06" numOctaves="2" seed="4" result="n"/><feDisplacementMap in="SourceGraphic" in2="n" scale="7" xChannelSelector="R" yChannelSelector="G"/><feGaussianBlur stdDeviation="2.400"/></filter>
              <filter id="b8" x="-30%" y="-30%" width="160%" height="160%"><feGaussianBlur stdDeviation="8"/></filter>
              <filter id="sw" x="-10%" y="-10%" width="120%" height="120%"><feTurbulence type="fractalNoise" baseFrequency=".045" numOctaves="3" seed="9" result="n"/><feDisplacementMap in="SourceGraphic" in2="n" scale="20" xChannelSelector="R" yChannelSelector="G"/><feGaussianBlur stdDeviation="5"/></filter>
              <filter id="b25" x="-40%" y="-40%" width="180%" height="180%"><feGaussianBlur stdDeviation="32"/></filter>
              <path id="plume" d="M95 710L115 708 190 702 245 710 256 750 268 785 262 808 248 815 255 826 290 828 308 822 308 800 292 760 272 712 262 690 262 655 275 615 277 580 300 555 325 562 333 590 345 618 372 622 386 650 395 690 412 705 432 702 436 662 450 635 486 630 492 592 505 552 520 537 538 552 565 522 590 478 598 456 620 460 640 466 665 437 705 430 714 396 728 388 737 430 760 450 800 447 835 412 860 404 900 412 960 405 1000 394 1004 440 1020 475 1055 510 1085 549 1040 565 985 578 955 598 905 615 872 648 866 675 878 720 905 770 918 812 940 835 975 840 992 868 1012 883 1080 888 1105 865 1116 828 1125 780 1150 712 1190 675 1240 658 1272 680 1292 712 1330 688 1362 686 1345 712 1300 752 1262 800 1232 845 1260 864 1340 870 1388 866 1398 838 1420 828 1438 858 1458 836 1510 815V1130H95z"/>
              <clipPath id="pc"><use href="#plume"/></clipPath>
            </defs>
            <svg x="861" y="547.500" width="491.500" height="341.500" viewBox="115 83 1377 1024" preserveAspectRatio="none">
              <path fill="url(#sky)" d="M100 70h1420v1060H100z"/>
              <g filter="url(#b25)"><path fill="none" stroke="#b85e45" stroke-width="120" opacity=".65" d="M790 330C920 260 1150 330 1160 480S1130 600 1100 660"/><path fill="none" stroke="#b4553f" stroke-width="60" opacity=".65" d="M115 620Q250 520 320 560M430 580Q520 450 720 390"/><ellipse cx="1400" cy="650" rx="150" ry="55" fill="#bb5e47" opacity=".85"/><ellipse cx="190" cy="660" rx="90" ry="50" fill="#ba5a44" opacity=".8"/><path fill="#8a0018" opacity=".8" d="M1350 60h180v180zM80 60h200L80 220z"/></g>
              <path filter="url(#b8)" fill="#ab3f31" d="M960 620L1180 560 1140 720 1100 870H1010L940 740z"/>
              <path filter="url(#b8)" fill="#c07258" d="M885 660L940 650 975 700 985 830 930 810z"/>
              <path filter="url(#b8)" fill="#a0302a" d="M1010 620h28l10 250h-35zM1030 420l60 30 20 50-30-10zM380 440h50l-10 230h-15z"/>
              <path filter="url(#b8)" fill="none" stroke="#c98468" stroke-width="34" d="M1492 665Q1380 690 1300 780M1492 800Q1400 800 1290 830"/>
              <path filter="url(#b3)" fill="none" stroke="#b04533" stroke-width="12" d="M1492 700Q1370 730 1290 830M1270 850Q1340 830 1390 862M1492 800Q1440 780 1380 815"/>
              <use href="#plume" filter="url(#b8)" fill="none" stroke="#cf7a5a" stroke-width="24"/>
              <path filter="url(#b8)" fill="#cf8c70" d="M735 385l60-25 40 25-10 50-60 15-25-20z"/>
              <use href="#plume" filter="url(#b3)" fill="url(#sea)" stroke="#d3b69c" stroke-width="7"/>
              <g clip-path="url(#pc)"><path filter="url(#b8)" fill="none" stroke="#86a0cc" stroke-width="26" opacity=".5" d="M262 690L262 655 275 615 277 580 300 555 325 562 333 590 345 618 372 622 386 650 395 690 412 705 432 702 436 662 450 635 486 630 492 592 505 552 520 537 538 552 565 522 590 478 598 456 620 460 640 466 665 437 705 430 714 396 728 388 737 430 760 450 800 447 835 412 860 404 900 412 960 405 1000 394 1004 440 1020 475 1055 510 1085 549 1040 565 985 578M1116 870L1125 780 1150 712 1190 675 1240 658 1272 680 1292 712 1330 688 1362 686 1345 712 1300 752 1262 800 1222 845"/></g>
              <path filter="url(#b3)" fill="#4e70bd" stroke="#c9b7a2" stroke-width="6" d="M1520 704Q1400 730 1325 806Q1400 768 1520 760z"/>
              <path filter="url(#b3)" fill="#cf8a6c" stroke="#dcc0a0" stroke-width="5" d="M250 700L268 712 296 770 306 820 262 818 268 790 254 740z"/>
              <path filter="url(#b8)" fill="#b3b8bb" d="M285 535l45-8 10 25-30 10zM765 370l25-5-5 25z"/>
              <g filter="url(#sw)">
                <path fill="#8099c4" d="M280 640h60l40 20 40 50-20 8-110-5zM450 650l50-30 40 30-60 50zM1160 730l50-40 60 30-60 120-70 25zM115 760l80-8 40 30-50 15-70-5z" opacity=".85"/>
                <path fill="#6d8cc6" d="M600 480l100-30 20 30-100 40zM520 570l50-30 30 60-70 40zM870 440l120-10 70 110-110 30-80-90z" opacity=".7"/>
                <path fill="#7189c3" d="M670 600l30-10-15 70-20-10zM700 690l35-25-10 25zM715 530l20-5-10 40z"/>
                <path fill="#4b6cc0" d="M1205 720l35 0-40 80-30 10z"/>
                <path fill="#333f98" d="M415 755l45 30 10 30-50-10zM885 800l45 70-10 25-115 25 45-45zM130 875l90 20 50 30-90-15zM335 735l45 20-30 15zM360 850l60 50-10 15-60-5zM230 910l60-20 40 30zM540 895h100l-50 15zM1090 900h140l-70 20zM565 840l40 15-30 5z"/>
                <path stroke="#3e50a6" stroke-width="16" opacity=".6" d="M115 925h440M760 930h740"/>
                <path fill="none" stroke="#4258a8" stroke-width="10" opacity=".5" d="M480 760l60 80M620 700l-30 70M770 790l-10 120M700 800l-20 90M1030 905h420M150 850l140 20M790 735l20 20"/>
              </g>
            </svg>
            <path fill="none" stroke="#eee" stroke-width="1.500" d="M861 547.500h491.500V889H861z"/>
            <path fill="none" stroke="#d86a6a" stroke-width="1.400" d="M812.700 514.500h588V922h-588z"/>
            <path stroke="#bbb" stroke-width=".8" d="M740 462.500L861 547.500M1474.500 462.500L1352.500 547.500M740 973.500L861 889M1474.500 973.500L1352.500 889"/>
            <path fill="none" stroke="#a9a9a9" stroke-width="1.800" d="M740 462.500h734.500v511H740z"/>
            <path stroke="#e0e0e0" stroke-width="3" stroke-dasharray="1.500 24.230" d="M746 462.500h728M746 973.500h728M740 481v493M1474.500 481v493"/>
            <circle cx="1106.500" cy="717.500" r="3.300" fill="#8d8d85"/><circle cx="1107" cy="716.500" r="1.800" fill="#eee"/>
            <path stroke="#b01818" stroke-width="1.500" d="M653 1016h50"/><path fill="#d01010" d="M700 1012l10 4-10 4z"/>
            <path stroke="#18a018" stroke-width="1.500" d="M652.500 1016v48"/><path fill="#20e020" d="M648 1060h9l-4.500 11z"/><circle cx="652.500" cy="1016" r="4.500" fill="#6f6a08"/>
            <g class="orient"><text x="655.500" y="1015">Y</text><text x="699" y="1016">X</text><text x="654" y="1060">Z</text></g>
            <path fill="url(#cw)" d="M1538.500 843h16.500v261h-16.500z"/>
            <path stroke="#aaa" stroke-width="1" d="M1552 843.500h12M1552 865.500h12M1552 878.500h12M1552 901.500h12M1552 904.500h12M1552 908.500h12M1552 912.500h12M1552 917.500h12M1552 923.500h12M1552 931.500h12M1552 940.500h12M1552 953.500h12M1552 976.500h12M1552 980.500h12M1552 984.500h12M1552 988.500h12M1552 993.500h12M1552 999.500h12M1552 1006.500h12M1552 1015.500h12M1552 1029.500h12M1552 1052.500h12M1552 1055.500h12M1552 1059.500h12M1552 1063.500h12M1552 1068.500h12M1552 1074.500h12M1552 1082.500h12M1552 1091.500h12M1552 1104.500h12"/>
            <g class="leg"><text x="1570" y="847" textLength="65">5.9e+06</text><text x="1570" y="883" textLength="41">2e+6</text><text x="1570" y="905.500" textLength="41">1e+6</text><text x="1570" y="928">500000</text><text x="1570" y="958">200000</text><text x="1570" y="980.500">100000</text><text x="1570" y="1003.500">50000</text><text x="1570" y="1033">20000</text><text x="1570" y="1056">10000</text><text x="1570" y="1078.500">5000</text><text x="1570" y="1108" textLength="65">2.0e+03</text></g>
            <g class="ax"><text x="1106.500" y="443">X Axis</text><text x="1106.500" y="1000">X Axis</text><text x="706" y="721.500">Z Axis</text><text x="1508" y="721.500">Z Axis</text></g>
          </svg>
          <div class="tgl">tg</div>
          <div class="nums top"><span>-2</span><span>-1</span><span>0</span><span>1</span><span>2</span><span>3</span><span>4</span><span>5</span><span>6</span><span>7</span><span>8</span><span>9</span><span>10</span><span>11</span><span>12</span><span>13</span><span>14</span><span>15</span><span>16</span><span>17</span><span>18</span><span>19</span><span>20</span><span>21</span><span>22</span><span>23</span><span>24</span><span>25</span><span>26</span></div>
          <div class="nums bottom"><span>-2</span><span>0</span><span>2</span><span>4</span><span>6</span><span>8</span><span>10</span><span>12</span><span>14</span><span>16</span><span>18</span><span>20</span><span>22</span><span>24</span><span>26</span></div>
          <div class="nums lft"><span>-15</span><span>-14</span><span>-13</span><span>-12</span><span>-11</span><span>-10</span><span>-9</span><span>-8</span><span>-7</span><span>-6</span><span>-5</span><span>-4</span><span>-3</span><span>-2</span><span>-1</span><span>0</span><span>1</span><span>2</span><span>3</span><span>4</span></div>
          <div class="nums rgt"><span>-15</span><span>-14</span><span>-13</span><span>-12</span><span>-11</span><span>-10</span><span>-9</span><span>-8</span><span>-7</span><span>-6</span><span>-5</span><span>-4</span><span>-3</span><span>-2</span><span>-1</span><span>0</span><span>1</span><span>2</span><span>3</span><span>4</span></div>
        </div>
      </div>
    </section>

    <aside class="dock right">
      <div class="dtitle">Color Map Editor<svg><use href="#dia"/></svg><svg><use href="#x"/></svg></div>
      <div class="rsearch"><div class="input ph">Search ... (use Esc to clear text)</div><div class="btn g"><svg><use href="#gear"/></svg></div><div class="btn g lit"><svg><use href="#cbar"/></svg></div><div class="btn g"><svg><use href="#ced"/></svg><small class="ee">e</small></div></div>
      <div class="arr">Array Name: tg</div>
      <div class="rscroll">
        <div class="rform">
          <div class="auto"><label>Automatic Rescale<br>Range Mode</label><div class="combo">Grow and update on 'Apply'<svg><use href="#dn"/></svg></div></div>
          <div class="ck c1"><i class="chk"></i>Interpret Values As Categories</div>
          <div class="ck c2"><i class="chk"></i>Rescale On Visibility Change</div>
          <h3>Mapping Data</h3>
          <div class="combo preset">Select a color map from default presets<svg><use href="#dn"/></svg></div>
          <div class="mapping">
            <svg class="plot" viewBox="0 0 377 323">
              <defs><linearGradient id="tri"><stop offset="0" stop-color="#fff"/><stop offset=".1" stop-color="#fffaf8"/><stop offset=".25" stop-color="#fadfd7"/><stop offset=".4" stop-color="#efbcb7"/><stop offset=".55" stop-color="#e29590"/><stop offset=".75" stop-color="#cd5759"/><stop offset=".9" stop-color="#bd2a3b"/><stop offset="1" stop-color="#b00024"/></linearGradient>
              <linearGradient id="hb"><stop offset="0" stop-color="#dfe3ea"/><stop offset=".03" stop-color="#efc9b2"/><stop offset=".08" stop-color="#f7ab8a"/><stop offset=".2" stop-color="#ec7f62"/><stop offset=".35" stop-color="#dc5d4a"/><stop offset=".5" stop-color="#d14a40"/><stop offset=".7" stop-color="#c43033"/><stop offset="1" stop-color="#b20424"/></linearGradient></defs>
              <path fill="#fff" d="M0 0h377v323H0z"/><path fill="url(#tri)" d="M5 275L372 5v270z"/><path stroke="#444" d="M5 275L372 4"/><path stroke="#a2a6ad" stroke-width="1.800" d="M5.500 5v270M372 5v270"/>
              <path fill="url(#hb)" d="M5 284h367v35H5z"/><path fill="#76869c" d="M5 284h4v35H5z"/><path fill="#8d5a70" d="M368.500 284h3.500v35h-3.500z"/>
              <g stroke="#777" stroke-width=".7"><circle cx="4.500" cy="275.500" r="3" fill="#8f9fd0"/><circle cx="4.500" cy="301.500" r="3" fill="#8f9fd0"/><circle cx="373" cy="4.500" r="3" fill="#d58a94"/><circle cx="373" cy="301.500" r="3" fill="#d58a94"/><circle cx="188.500" cy="301" r="3" fill="#e5b5a8"/></g>
            </svg>
            <div class="mbtns"><div class="btn"><svg><use href="#resc"/></svg></div><div class="btn"><svg><use href="#resc"/></svg></div><div class="btn"><svg><use href="#resc"/></svg></div><div class="btn"><svg><use href="#resce"/></svg></div><div class="btn"><svg><use href="#wc"/></svg></div><div class="btn"><svg><use href="#fav"/></svg></div><div class="btn"><svg><use href="#save"/></svg></div><div class="btn off"><svg><use href="#ghist"/></svg></div><div class="btn lit"><svg><use href="#gear"/></svg></div></div>
          </div>
          <div class="data"><label>Data:</label><div class="input"></div></div>
          <div class="ck k k1"><i class="chk"></i>Enable Freehand Drawing Of Opacity Transfer Function</div>
          <div class="ck k"><i class="chk yes"><svg viewBox="0 0 12 12"><path fill="none" stroke="#dfe3e2" stroke-width="1.700" d="M1 6l3.500 3.500L11 2.500"/></svg></i><span class="ul">Use Log Scale When Mapping Data To Colors</span></div>
          <div class="ck k"><i class="chk"></i>Enable Opacity Mapping For Surfaces</div>
          <div class="ck k dis"><i class="chk"></i>Use Log Scale When Mapping Data To Opacity</div>
          <div class="ctf">Color transfer function values</div>
          <table><colgroup><col class="n"><col><col><col><col></colgroup>
            <tr><th colspan="2" class="val">Value</th><th>R</th><th>G</th><th class="lastc">B</th></tr>
            <tr><td class="n">1</td><td>1999.87</td><td>0.231373</td><td>0.298039</td><td>0.752941</td></tr>
            <tr class="alt"><td class="n"></td><td>1999.11</td><td>0.865003</td><td>0.865003</td><td>0.865003</td></tr>
          </table>
        </div>
        <div class="track"><i class="thumbr"></i></div>
      </div>
    </aside>
  </main>
  <footer><div class="stop"><svg><use href="#del"/></svg></div><div class="prog"></div></footer>
</div>
</body>
</html>
```
FILE: styles.css
```css
* { box-sizing: border-box; }
body { margin: 0; width: 2156px; height: 1200px; background: #000; overflow: hidden; color: #bcbdbe; font: 13.33px/18px "Noto Sans", sans-serif; }
i, em, b { font-style: normal; font-weight: normal; }
svg { flex: none; display: block; }
.defs { position: absolute; }

.window { display: flex; flex-direction: column; width: 2085px; height: 1129px; margin: 29px 0 0 35px; background: #0f1012; }
.titlebar { display: flex; align-items: center; height: 33px; padding: 0 10px 0 7px; }
.titlebar h1 { flex: 1; margin: 0; font-size: 13.8px; font-weight: normal; text-align: center; padding: 0 0 0 26px; color: #d0d1d2; }
.logo { width: 19px; height: 17px; }
.pin { width: 14px; height: 14px; margin-left: 11px; }
.winbtns { display: flex; gap: 15px; color: #d8d9da; }
.winbtns svg { width: 12px; height: 12px; }
.menubar { display: flex; height: 32px; line-height: 33px; }
.menubar a { padding: 0 11.25px; }

.bar { display: flex; align-items: center; height: 50px; }
.bar b { position: relative; display: flex; align-items: center; justify-content: center; width: 36.92px; height: 34px; flex: none; }
.bar b svg { width: 22px; height: 23px; overflow: visible; }
.bar b.on { width: 34px; margin: 0 1.46px; background: #222427; border: 1px solid #3b3d40; border-radius: 3px; }
.bar small { position: absolute; font-size: 9px; line-height: 10px; color: #a0a1a2; }
.cn { right: 3px; bottom: 4px; }
.tl { left: 7px; top: 8px; }
.tr { right: 8px; top: 8px; }
.br { right: 6px; bottom: 3px; }
.bl { left: 5px; bottom: 3px; }
.bar b .up3 { width: 19px; height: 19px; margin: -9px 6px 0 0; }
.bar b .up3.rt { margin: -9px 0 0 6px; }
.ee { position: absolute; font: italic bold 17px/16px "Liberation Serif", serif; color: #000; margin: 3px 0 0 7px; }
.sep { width: 9px; height: 37px; flex: none; background: linear-gradient(#3a3c3e, #3a3c3e) center / 1px 100% no-repeat; }
.grip { width: 4px; height: 37px; margin: 0 4px 0 9.500px; border: solid #3a3c3e; border-width: 0 1px; flex: none; }
.g11 { margin-left: 16px; }
.g13 { margin-left: 17px; }
.g14 { margin-left: 17px; }
.time { margin-left: 1px; width: 37px; }
.input { display: flex; align-items: center; height: 32.5px; padding-left: 7px; background: #000; border: 1px solid #323437; border-radius: 3px; }
.timebox { width: 145px; }
.spin { width: 45px; margin-left: 4.5px; color: #3c3e40; border-color: #1d1f21; justify-content: space-between; padding-right: 6px; }
.spin svg { width: 10px; height: 10px; margin: 2px 0; }
.combo { position: relative; display: flex; align-items: center; height: 32.5px; padding: 0 5.500px 0 6px; background: linear-gradient(#1d2023, #15181a); border: 1px solid #3b3e41; border-radius: 3px; }
.combo svg { width: 11px; height: 11px; margin-left: auto; }
.combo em { width: 4px; height: 4px; border-radius: 2px; background: #edc135; margin: 0 12px 0 7px; }
.off { background: #131518 !important; border-color: #222426 !important; color: #4d4f51 !important; }
.c160 { width: 160px; margin-left: 1.500px; }
.c93 { width: 92.5px; margin-left: 7px; }
.c160b { width: 160px; margin-left: 1px; }

main { display: grid; grid-template-columns: 510px 1124px 451px; height: 878px; border-top: 1px solid #47494b; flex: none; }
.dock { background: #0b0c0e; border: 1px solid #34363a; border-radius: 3px; }
.dtitle { display: flex; align-items: center; height: 28px; padding: 0 9px 0 4px; }
.dtitle svg { width: 11px; height: 11px; color: #77797b; margin-left: 14px; margin-top: -3px; }
.dtitle svg:first-of-type { margin-left: auto; }
.left { padding: 1px 2px 0 1.5px; }
.pipeline { height: 297px; padding: 0 1px; }
.pipeline .dtitle { height: 31px; padding: 0 8px 3px 3px; }
.pipeline ul { height: 263px; margin: 0; padding: 2px 0 0; list-style: none; background: #000; border: 1px solid #3c3e41; border-radius: 2px; }
.pipeline li { display: flex; align-items: center; height: 24px; padding-left: 4px; }
.pipeline li i { width: 15px; }
.pipeline li svg { width: 17px; height: 17px; margin-left: 24px; }
.pipeline li .eye { width: 15px; height: 15px; margin: 0; }
.pipeline li i + svg { height: 15px; }
.pipeline li span { padding: 0 5px 0 3px; line-height: 20px; margin-left: 1px; }
.sel { background: #04695d; color: #e8eaea; }
.tabs { display: flex; margin-top: 2px; height: 33px; line-height: 34px; }
.tabs a { background: #08090b; padding: 0 9px 0 8px; }
.tabs .cur { background: #0e0f11; border: solid #2c2e31; border-width: 0 1px; box-shadow: inset 0 3px #0b6b60; border-radius: 3px 3px 0 0; padding: 0 10px; }
.tabs .cur + a { padding-left: 9px; }
.tabs i { flex: 1; border-bottom: 1px solid #303235; }
.props { height: 542px; margin-top: 1px; display: flex; flex-direction: column; }
.props .dtitle { height: 38px; padding-bottom: 10px; }
.actions { display: flex; gap: 4.500px; padding: 0 8px 0 7.500px; align-items: center; }
.btn { display: flex; align-items: center; justify-content: center; gap: 8px; color: #c3c4c5; background: linear-gradient(#1d2023, #15181a); border: 1px solid #3b3e41; border-radius: 3px; flex: none; }
.actions .btn { width: 119px; height: 34.500px; }
.actions .btn svg { width: 16px; height: 16px; }
.actions .btn svg.sm { width: 12px; height: 12px; }
.actions .help { height: 32.5px; color: #a6d189; font-size: 19px; }
.g { width: 32.5px; height: 32.5px; }
.g svg { width: 16px; height: 16px; }
.lit { background: #2a2d30; }
.searchrow { display: flex; justify-content: space-between; padding: 9px 7.500px 0 7.500px; }
.searchrow .input { width: 453px; }
.ph { color: #65676a; }
.scroll { display: flex; height: 412px; margin-top: 8px; overflow: hidden; }
.form { width: 476px; height: 412px; padding-left: 6.500px; }
.row { display: flex; height: 32px; margin: 7.500px 0 0 1.500px; }
.row.disp { margin-top: -19px; height: 33px; gap: 6.300px; align-items: stretch; }
.dh { width: 315px; padding-left: 30px; font-weight: bold; font-size: 14px; color: #c9cacb; margin-right: .5px; }
.s { width: 31.700px; }
.s svg { width: 15px; height: 15px; }
.dim { opacity: .6; }
.row.rep { margin-top: 9px; }
.row label { width: 100.500px; margin-left: -1.500px; flex: none; }
.row label + .combo { width: 366px; margin-left: 1px; }
.form h3, .rform h3 { margin: 0; height: 31px; padding-top: 11px; font-size: 13.33px; line-height: 18px; border-bottom: 1px solid #333538; color: #c9cacb; width: 468.500px; }
.w212 { width: 211.700px; }
.w211 { width: 211px; margin-left: 6px; }
.row.edit { margin-top: 7px; height: 34px; gap: 6.300px; align-items: center; }
.row.edit .s { height: 32.500px; }
.e { width: 200.500px; height: 34px; }
.e svg { width: 15px; height: 15px; }
.slider { position: relative; width: 179px; height: 6px; margin: 13px 0 0 1px; border: 1px solid #333538; border-radius: 3px; background: #17191b; }
.slider.full { background: #064a41; border-color: #0a594f; }
.slider i { position: absolute; left: -1px; top: -8px; width: 20px; height: 20px; border-radius: 10px; border: 1px solid #56595b; background: #16191b; }
.slider.full i { left: auto; right: -1px; }
.v { width: 178px; margin-left: 9px; }
hr { margin: 7px 0 0; border: 0; border-top: 1px solid #333538; width: 468.500px; }
.row.dag { margin-top: 11.500px; }
.dag .chk { margin-top: 8px; }
.row.dag label { margin: 7px 0 0 7px; width: 103px; }
.dag .btn { width: 338.500px; }
.track { position: relative; width: 23px; background: #101113; }
.track i { position: absolute; width: 8.500px; border: 1px solid #46484a; border-radius: 5px; background: #2b2d2f; }
.thumbl { left: 7px; top: 169px; height: 109px; }
.chk { width: 17.500px; height: 17.500px; border: 1px solid #35373a; border-radius: 3px; background: #000; flex: none; }
.yes { background: #04362f; border-color: #0a7264; }
.yes svg { width: 13px; height: 13px; margin: 1.500px; }

.center { padding: 0 4px 0 2px; }
.ltabs { display: flex; height: 33px; padding-left: 1px; }
.lt { display: flex; align-items: center; }
.lt.cur { width: 139.500px; background: #0b0c0e; box-shadow: inset 0 3px #0b6b60; border-right: 1px solid #303235; padding: 0 11px 1px 10px; justify-content: space-between; }
.lt.cur svg { width: 11px; height: 11px; color: #808284; }
.lt.cur span { margin-left: 2px; }
.lt.plus { width: 87.500px; background: #08090b; justify-content: center; border-bottom: 1px solid #303235; }
.ltabs i { flex: 1; border-bottom: 1px solid #3c3e41; }
.frame { height: 843px; border: 1px solid #303235; border-top: 0; border-radius: 0 3px 3px 3px; padding: 0 1.500px; }
.vbar { display: flex; align-items: center; height: 40px; padding: 1px 1.500px 0 1px; }
.vbar b { width: 32.600px; display: flex; justify-content: center; flex: none; }
.vbar b svg { width: 19px; height: 19px; overflow: visible; }
.vbar b svg.pm { width: 17px; height: 17px; }
.vbar .t3 { color: #6d6c55; font-size: 12.500px; }
.vbar .sep { height: 32px; width: 8.500px; }
.more { width: 14px; height: 14px; margin-left: 11.500px; }
.rv { margin-left: auto; margin-right: 13.500px; font-weight: bold; font-size: 14.100px; text-decoration: underline; text-underline-offset: 3px; color: #c9cacb; }
.r { width: 33.500px; height: 34.500px; margin-left: 4.200px; }
.rv + .r { margin-left: 0; }
.r svg { width: 16px; height: 16px; }
.r.d svg { width: 12px; height: 12px; color: #66686a; }
.view { position: relative; height: 800px; width: 1114px; background: #000; border: 2.500px solid #2b86c8; overflow: hidden; }
.scene { position: absolute; left: -2px; top: -2px; width: 1114px; height: 800px; }
.leg { font: 300 17.200px Lato, sans-serif; fill: #f0f0f0; stroke: #f0f0f0; stroke-width: .25px; }
.ax { font: 13px Lato, sans-serif; fill: #aaa; text-anchor: middle; }
.orient { font: 15.500px Lato, sans-serif; fill: #f2f2f2; }
.tgl { position: absolute; left: 1082px; top: 640px; width: 22px; height: 24px; font: 19px/22px Lato, sans-serif; color: #f0f0f0; writing-mode: vertical-rl; transform: rotate(180deg); }
.nums { position: absolute; display: flex; font: 13px/26px Lato, sans-serif; color: #a8a8a8; }
.nums span { flex: 1; text-align: center; }
.top { left: 182.700px; top: 116px; width: 746.200px; }
.bottom { left: 169.800px; top: 651px; width: 772px; }
.lft, .rgt { flex-direction: column; top: 147.700px; height: 514.600px; width: 30px; }
.lft span, .rgt span { line-height: 25.700px; text-align: right; }
.lft { left: 153.500px; }
.rgt { left: 928.500px; }
.rgt span { text-align: left; }

.right { margin: 1px 0 0 1.500px; height: 874px; padding-left: 6px; }
.right .dtitle { height: 30px; padding: 0 10.500px 2px 0; margin-left: -1.500px; }
.rsearch { display: flex; gap: 4.500px; padding-left: 1.500px; margin-top: 7.500px; }
.rsearch .input { width: 321px; }
.arr { height: 34px; line-height: 37px; }
.rscroll { display: flex; height: 763px; overflow: hidden; }
.rform { width: 412px; height: 763px; }
.auto { display: flex; height: 40px; }
.auto label { width: 121px; line-height: 20px; flex: none; }
.auto .combo { width: 289.500px; margin-top: 3.500px; }
.ck { display: flex; align-items: center; gap: 6.500px; padding-left: 2px; height: 18px; }
.c1 { margin-top: 6.500px; }
.c2 { margin-top: 10px; }
.rform h3 { width: 410.500px; height: 32px; padding-top: 12.500px; }
.preset { width: 409px; margin: 8px 0 0 1.500px; }
.mapping { display: flex; margin-top: 7px; gap: 1px; }
.plot { width: 377px; height: 323px; }
.mbtns { display: flex; flex-direction: column; gap: 3.600px; padding-top: 1px; }
.mbtns .btn { width: 32.500px; height: 32.400px; }
.mbtns svg { width: 16px; height: 16px; }
.data { display: flex; margin-top: 8px; line-height: 32px; }
.data label { width: 42px; }
.data .input { width: 368.500px; height: 31px; border-color: #1b1d1f; }
.k { margin-top: 12.400px; }
.k1 { margin-top: 11px; }
.ul { border-bottom: 1px solid #0c7c6c; margin-bottom: -2px; line-height: 19px; }
.dis { color: #3f4143; }
.dis .chk { border-color: #161719; }
.ctf { margin-top: 10.500px; height: 27px; line-height: 18px; }
table { width: 409px; margin-left: 1.500px; border-collapse: collapse; table-layout: fixed; border: 1px solid #333538; background: #000; }
col.n { width: 17px; }
th { height: 26px; padding: 0; font-size: 12px; font-weight: normal; background: #16191c; border: 1px solid #2b2e30; border-width: 0 1px 1px 0; }
th.val { padding-left: 17px; }
th.lastc { padding-left: 10px; }
td { height: 32px; padding: 0 0 0 3px; border: 1px solid #2b2e30; }
td.n { width: 17px; background: #16191c; font-size: 11px; }
.alt td { background: #0c0d0f; line-height: 18px; }
.thumbr { left: 7px; top: 6px; height: 390px; }

footer { display: flex; justify-content: flex-end; height: 35px; padding-top: 3px; align-items: flex-start; }
.stop { width: 27px; height: 29px; margin-right: 4px; border: 1px solid #191b1d; border-radius: 3px; background: #131518; display: flex; align-items: center; justify-content: center; }
.stop svg { width: 8px; height: 8px; filter: grayscale(1) brightness(1.900); }
.prog { width: 1008px; height: 30px; border: 1px solid #6a7178; background: #111315; }
```
